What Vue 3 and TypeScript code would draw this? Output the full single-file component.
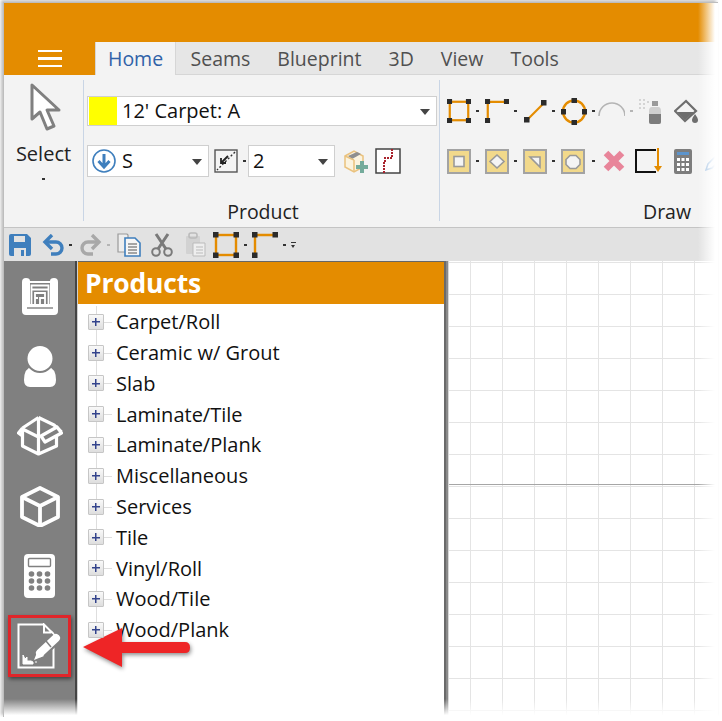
<script setup lang="ts">
const tabs = ['Seams', 'Blueprint', '3D', 'View', 'Tools']
const products = [
  'Carpet/Roll',
  'Ceramic w/ Grout',
  'Slab',
  'Laminate/Tile',
  'Laminate/Plank',
  'Miscellaneous',
  'Services',
  'Tile',
  'Vinyl/Roll',
  'Wood/Tile',
  'Wood/Plank',
]
</script>

<template>
  <div class="window">
    <!-- shared drawing symbols -->
    <svg class="defs" aria-hidden="true">
      <symbol id="node-square" viewBox="0 0 26 26">
        <rect x="3" y="3" width="20" height="20" fill="none" stroke="#e48c00" stroke-width="2.400" />
        <path d="M0 0h5.500v5.500H0zM20.500 0H26v5.500h-5.500zM0 20.500h5.500V26H0zM20.500 20.500H26V26h-5.500z" fill="#2b2b2b" />
      </symbol>
      <symbol id="node-corner" viewBox="0 0 26 26">
        <path d="M3 23V3h20" fill="none" stroke="#e48c00" stroke-width="2.400" />
        <path d="M0 0h5.500v5.500H0zM20.500 0H26v5.500h-5.500zM0 20.500h5.500V26H0z" fill="#2b2b2b" />
      </symbol>
    </svg>

    <div class="titlebar" />

    <div class="tabbar">
      <div class="menu-btn">
        <span /><span /><span />
      </div>
      <div class="tab active">Home</div>
      <div v-for="tab in tabs" :key="tab" class="tab">{{ tab }}</div>
    </div>

    <div class="ribbon">
      <div class="group select-group">
        <svg width="32" height="50" viewBox="0 0 32 50">
          <path d="M2 3v34l8-7 7 17 7-3-7-16h12z" fill="#fff" stroke="#808080" stroke-width="3" stroke-linejoin="round" />
        </svg>
        <div class="select-label">Select</div>
        <span class="drop" />
      </div>

      <div class="group product-group">
        <div class="rows">
          <div class="combo wide">
            <span class="swatch" />
            <span class="combo-text">12' Carpet: A</span>
            <span class="caret" />
          </div>
          <div class="row second">
            <div class="combo seam">
              <svg width="26" height="26" viewBox="0 0 26 26">
                <circle cx="13" cy="13" r="11" fill="#fff" stroke="#3f7fbd" stroke-width="1.6" />
                <path d="M13 6v13M7.500 13l5.500 6 5.500-6" fill="none" stroke="#3f7fbd" stroke-width="3" />
              </svg>
              <span class="combo-text">S</span>
              <span class="caret" />
            </div>
            <svg class="offset-icon" width="24" height="24" viewBox="0 0 24 24">
              <rect x="1" y="1" width="22" height="22" fill="#f4f4f4" stroke="#555" stroke-width="1.400" />
              <path d="M21 3L3 21" stroke="#333" stroke-width="1.400" stroke-dasharray="2 2" />
              <path d="M14 7l-7 7M7 9v5h5" fill="none" stroke="#222" stroke-width="1.800" />
            </svg>
            <span class="drop before-count" />
            <div class="combo count">
              <span class="combo-text">2</span>
              <span class="caret" />
            </div>
            <svg class="add-icon" width="26" height="26" viewBox="0 0 26 26">
              <path d="M2 8l9-5 9 5v11l-9 5-9-5z" fill="#fbf3df" stroke="#eac27e" stroke-width="1.500" />
              <path d="M5 8l9-4 4 2-9 5z" fill="#8f8f8f" />
              <path d="M11 12v11M2 8l9 4" fill="none" stroke="#eac27e" stroke-width="1.500" />
              <path d="M19 13v12M13 19h12" stroke="#74ab9b" stroke-width="4" />
            </svg>
            <svg class="route-icon" width="26" height="26" viewBox="0 0 26 26">
              <rect x="1" y="1" width="24" height="24" fill="#fff" stroke="#444" stroke-width="1.500" />
              <path d="M17 1v9h-7v5H9v10" fill="none" stroke="#a8222c" stroke-width="2" stroke-dasharray="2 1" />
            </svg>
          </div>
        </div>
        <div class="group-label">Product</div>
      </div>

      <div class="group draw-group">
        <div class="rows">
          <div class="row first">
            <svg width="24" height="24"><use href="#node-square" /></svg>
            <span class="drop" />
            <svg width="24" height="24"><use href="#node-corner" /></svg>
            <span class="drop" />
            <svg width="24" height="24" viewBox="0 0 24 24">
              <path d="M4 21L21 4" stroke="#e48c00" stroke-width="2.200" />
              <path d="M1 18h5.500v5.500H1zM18 1h5.500v5.500H18z" fill="#2b2b2b" />
            </svg>
            <span class="drop" />
            <svg width="26" height="27" viewBox="0 0 26 27">
              <circle cx="13" cy="13.500" r="11" fill="none" stroke="#e48c00" stroke-width="2.400" />
              <path d="M10.500 0H16v5h-5.500zM10.500 22H16v5h-5.500zM0 11h5v5.500H0zM21 11h5v5.500h-5z" fill="#2b2b2b" />
            </svg>
            <span class="drop tight" />
            <svg width="27" height="24" viewBox="0 0 27 24">
              <path d="M1 17a13 13 0 0 1 26 0" fill="none" stroke="#b4b4b4" stroke-width="1.600" />
            </svg>
            <span class="drop muted" />
            <svg width="35" height="26" viewBox="0 0 35 26">
              <path d="M0 1h2v2H0zM4 1h2v2H4zM0 5h2v2H0zM4 5h2v2H4zM8 3h2v2H8zM0 9h2v2H0zM4 9h2v2H4z" fill="#d4d4d4" />
              <rect x="13" y="3" width="6" height="5" fill="#9a9a9a" />
              <path d="M10 13q0-4 3-4h6q3 0 3 4v11q0 2-2 2h-8q-2 0-2-2z" fill="#cfcfcf" />
              <path d="M10 16h12v8q0 2-2 2h-8q-2 0-2-2z" fill="#7c7c7c" />
            </svg>
            <svg width="42" height="26" viewBox="0 0 42 26">
              <path d="M12 3L1 13l10 10 11-10z" fill="#f4f4f4" stroke="#6e6e6e" stroke-width="2.200" />
              <path d="M3 14h17l-9 8z" fill="#6e6e6e" />
              <path d="M21 16q-3 4-3 6a3 3 0 0 0 6 0q0-2-3-6z" fill="#6e6e6e" />
            </svg>
            <svg width="20" height="26" viewBox="0 0 20 26">
              <path d="M3 8q3-5 7-3" fill="none" stroke="#a6c6e6" stroke-width="3" />
              <path d="M1 18h3v6H1z" fill="#d4d4d4" />
            </svg>
          </div>
          <div class="row second">
            <svg width="24" height="25" viewBox="0 0 24 25">
              <rect x="1" y="1" width="22" height="23" fill="#f2d98b" stroke="#a3a3a3" stroke-width="2" />
              <rect x="7" y="7.500" width="10" height="10" fill="#f4f4f4" stroke="#999" stroke-width="1.600" />
            </svg>
            <span class="drop" />
            <svg width="24" height="25" viewBox="0 0 24 25">
              <rect x="1" y="1" width="22" height="23" fill="#f2d98b" stroke="#a3a3a3" stroke-width="2" />
              <path d="M12 6l7 6.500-7 6.500-7-6.500z" fill="#f4f4f4" stroke="#999" stroke-width="1.600" />
            </svg>
            <span class="drop" />
            <svg width="24" height="25" viewBox="0 0 24 25">
              <rect x="1" y="1" width="22" height="23" fill="#f2d98b" stroke="#a3a3a3" stroke-width="2" />
              <path d="M7 8h10v10z" fill="#f4f4f4" stroke="#999" stroke-width="1.600" />
            </svg>
            <span class="drop" />
            <svg width="26" height="25" viewBox="0 0 26 25">
              <rect x="1" y="1" width="22" height="23" fill="#f2d98b" stroke="#a3a3a3" stroke-width="2" />
              <path d="M9 6.500h6l4 4v5l-4 4H9l-4-4v-5z" fill="#f4f4f4" stroke="#999" stroke-width="1.600" />
            </svg>
            <span class="drop" />
            <svg width="34" height="24" viewBox="0 0 34 24">
              <path d="M5 4l16 16M21 4L5 20" stroke="#e8859a" stroke-width="6.500" />
            </svg>
            <svg width="38" height="26" viewBox="0 0 38 26">
              <path d="M21 2H1v22h20" fill="none" stroke="#111" stroke-width="2" />
              <path d="M23 0v20" stroke="#e48c00" stroke-width="2" />
              <path d="M19 18h8l-4 6z" fill="#e48c00" />
            </svg>
            <svg width="32" height="25" viewBox="0 0 32 25">
              <rect x="1" y="0" width="18" height="25" rx="2" fill="#7d7d7d" />
              <rect x="4" y="3" width="12" height="3" fill="#5c94cc" />
              <path d="M4 9h3v3H4zM8.500 9h3v3h-3zM13 9h3v3h-3zM4 14h3v3H4zM8.500 14h3v3h-3zM13 14h3v3h-3zM4 19h3v3H4zM8.500 19h3v3h-3zM13 19h3v3h-3z" fill="#fff" />
            </svg>
            <svg width="20" height="26" viewBox="0 0 20 26">
              <path d="M1 22l2-6L14 5l4 4L7 20z" fill="#f4f7fb" stroke="#8db4dc" stroke-width="1.500" />
            </svg>
          </div>
        </div>
        <div class="group-label draw-label">Draw</div>
      </div>
    </div>

    <div class="qat">
      <svg width="22" height="22" viewBox="0 0 22 22">
        <path d="M0 2q0-2 2-2h16l4 4v16q0 2-2 2H2q-2 0-2-2z" fill="#3f7fbd" />
        <path d="M5 2h11v6H5zM5 14h12v8H5z" fill="#e2e2e2" />
        <path d="M12 16h3v6h-3z" fill="#3f7fbd" />
      </svg>
      <svg class="q-undo" width="22" height="22" viewBox="0 0 22 22">
        <path d="M3 8h11a6 6 0 0 1 0 12H9" fill="none" stroke="#3f7fbd" stroke-width="3.400" />
        <path d="M10 1L3 8l7 7" fill="none" stroke="#3f7fbd" stroke-width="3.400" />
      </svg>
      <span class="drop" />
      <svg class="q-redo" width="22" height="22" viewBox="0 0 22 22">
        <path d="M19 8H8a6 6 0 0 0 0 12h5" fill="none" stroke="#a8a8a8" stroke-width="3.400" />
        <path d="M12 1l7 7-7 7" fill="none" stroke="#a8a8a8" stroke-width="3.400" />
      </svg>
      <span class="drop muted" />
      <svg class="q-copy" width="25" height="24" viewBox="0 0 25 24">
        <path d="M1 1h9l1 1v17H1z" fill="#eee" stroke="#9a9a9a" stroke-width="1.200" />
        <path d="M8 5h10l5 5v13H8z" fill="#f6f6f6" stroke="#3f7fbd" stroke-width="1.600" />
        <path d="M11 11h9M11 14h9M11 17h9M11 20h9" stroke="#555" stroke-width="1.200" />
      </svg>
      <svg class="q-cut" width="22" height="24" viewBox="0 0 22 24">
        <circle cx="5" cy="19" r="3.800" fill="none" stroke="#7a7a7a" stroke-width="2" />
        <circle cx="17" cy="19" r="3.800" fill="none" stroke="#7a7a7a" stroke-width="2" />
        <path d="M7 16L17 1M15 16L5 1" stroke="#7a7a7a" stroke-width="3" />
      </svg>
      <svg class="q-paste" width="21" height="25" viewBox="0 0 21 25">
        <rect x="1" y="4" width="14" height="18" rx="1" fill="#d2d2d2" />
        <rect x="4" y="1" width="8" height="5" rx="2" fill="none" stroke="#bbb" stroke-width="1.600" />
        <path d="M8 11h12v13H8z" fill="#eee" stroke="#bbb" />
        <path d="M11 15h7M11 18h7M11 21h7" stroke="#bbb" />
      </svg>
      <svg class="q-square" width="26" height="26"><use href="#node-square" /></svg>
      <span class="drop" />
      <svg width="26" height="26"><use href="#node-corner" /></svg>
      <span class="drop" />
      <span class="more" />
    </div>

    <div class="main">
      <nav class="sidebar">
        <div class="nav-item">
          <svg width="36" height="37" viewBox="0 0 36 37">
            <path d="M0 4q0-4 4-4t4 3h20q0-3 4-3t4 4v29q0 4-4 4H4q-4 0-4-4z" fill="#fff" />
            <path d="M8 5h20v21H8z" fill="#808080" />
            <path d="M9.500 26V7.500h17V26M9.500 11.500h17" fill="none" stroke="#fff" stroke-width="1.800" />
            <path d="M13 26v-11h10v5h-5v6M13 20h3M23 20v6" fill="none" stroke="#fff" stroke-width="1.800" />
            <path d="M5 30h26" stroke="#808080" stroke-width="1.400" />
          </svg>
        </div>
        <div class="nav-item">
          <svg width="32" height="42" viewBox="0 0 32 42">
            <path d="M0 35q0-12 9-14h14q9 2 9 14 0 7-6 7H6q-6 0-6-7z" fill="#fff" />
            <circle cx="16" cy="13.500" r="13.500" fill="#fff" stroke="#808080" stroke-width="2" />
          </svg>
        </div>
        <div class="nav-item">
          <svg width="46" height="40" viewBox="0 0 46 40">
            <path d="M5.500 13v17l16 8 18-8V18M21.500 21v17M5.500 13l16 8" fill="none" stroke="#fff" stroke-width="3.200" stroke-linejoin="round" />
            <path d="M5.500 12L1.500 17l4 3M5.500 12L21.500 1.500M21.500 1.500V21M21.500 1.500L37 9l7.500 7" fill="none" stroke="#fff" stroke-width="3.200" stroke-linejoin="round" />
            <path d="M24 20l16-9 4.500 6L28 26z" fill="#808080" stroke="#fff" stroke-width="3.200" stroke-linejoin="round" />
          </svg>
        </div>
        <div class="nav-item">
          <svg width="40" height="41" viewBox="0 0 40 41">
            <path d="M20 2L2 11v20l18 9 18-9V11z" fill="none" stroke="#fff" stroke-width="3.800" stroke-linejoin="round" />
            <path d="M2 11l18 9 18-9M20 20v20" fill="none" stroke="#fff" stroke-width="3.800" stroke-linejoin="round" />
          </svg>
        </div>
        <div class="nav-item">
          <svg width="31" height="44" viewBox="0 0 31 44">
            <rect width="31" height="44" rx="4" fill="#fff" />
            <rect x="4.500" y="4.500" width="22" height="8" rx="1" fill="none" stroke="#808080" stroke-width="1.400" />
            <g fill="#808080">
              <circle cx="7.500" cy="20" r="2.800" /><circle cx="15.500" cy="20" r="2.800" /><circle cx="23.500" cy="20" r="2.800" />
              <circle cx="7.500" cy="27" r="2.800" /><circle cx="15.500" cy="27" r="2.800" /><circle cx="23.500" cy="27" r="2.800" />
              <circle cx="7.500" cy="34" r="2.800" /><circle cx="15.500" cy="34" r="2.800" /><circle cx="23.500" cy="34" r="2.800" />
            </g>
          </svg>
        </div>
        <div class="nav-item">
          <div class="marked">
            <svg width="46" height="46" viewBox="0 0 46 46">
              <path d="M26 1.500H1.500v43h35V24" fill="none" stroke="#fff" stroke-width="2" />
              <path d="M27 1.500v8h8z" fill="none" stroke="#fff" stroke-width="2" />
              <path d="M22 30L39 15" stroke="#808080" stroke-width="13" />
              <path d="M23 30L39 15" stroke="#fff" stroke-width="8" stroke-linecap="round" />
              <path d="M17 37l4-10 6 6z" fill="#fff" />
              <path d="M29 18l5 6" stroke="#808080" stroke-width="1.500" />
              <path d="M34 8l7 8" stroke="#fff" stroke-width="1.500" />
              <path d="M6 38v-6l2 4 2-2v4h4l2 1v2H6zM18 39h2" fill="#fff" stroke="#fff" />
            </svg>
          </div>
        </div>
      </nav>
      <div class="split" />
      <section class="panel">
        <h2 class="panel-title">Products</h2>
        <ul class="tree">
          <li v-for="item in products" :key="item" class="tree-row">
            <span class="expander" />
            <span class="tree-text">{{ item }}</span>
          </li>
        </ul>
      </section>
      <div class="split wide-split" />
      <div class="canvas" />
    </div>

    <!-- faded screenshot edges -->
    <div class="fade-right" />
    <div class="fade-bottom" />

    <!-- callout arrow -->
    <svg class="callout" width="118" height="56" viewBox="0 0 118 56">
      <path d="M5 27L44 8v14h63q5 0 5 5.500T107 33H44v14z" fill="#ee2526" />
    </svg>
  </div>
</template>

<style scoped>
.window {
  position: relative;
  width: 715px;
  height: 715px;
  margin: 2px 0 0 3px;
  display: flex;
  flex-direction: column;
  overflow: hidden;
  font-family: "Open Sans", "Noto Sans", sans-serif;
  color: #111;
  background: #fff;
  border-top: 1px solid #bdbdbd;
  border-left: 1px solid #bdbdbd;
  box-sizing: border-box;
  box-shadow: -2px -2px 3px rgba(0, 0, 0, 0.25);
}
.defs {
  display: none;
}
svg {
  flex: none;
  display: block;
}
.titlebar {
  height: 39px;
  flex: none;
  background: #e48c00;
}
.tabbar {
  height: 33px;
  flex: none;
  display: flex;
  background: #e6e6e6;
  border-bottom: 1px solid #d6d6d6;
  box-sizing: border-box;
  font-size: 19.500px;
  color: #505050;
}
.menu-btn {
  width: 91px;
  height: 33px;
  flex: none;
  background: #e48c00;
  display: flex;
  flex-direction: column;
  align-items: center;
  justify-content: center;
  gap: 5px;
}
.menu-btn span {
  width: 24px;
  height: 2.500px;
  background: #fff;
}
.tab {
  padding: 0 13.500px;
  line-height: 33px;
  height: 33px;
  box-sizing: border-box;
}
.tab.active {
  width: 81px;
  padding: 0 12px;
  margin-right: 1px;
  background: #f3f3f3;
  color: #2f62a8;
  border-right: 1px solid #d6d6d6;
  border-left: 1px solid #d6d6d6;
}
.ribbon {
  height: 153px;
  flex: none;
  display: flex;
  box-sizing: border-box;
  padding: 5px 0 6px;
  background: #f3f3f3;
  border-bottom: 1px solid #c4c4c4;
  overflow: hidden;
}
.group {
  display: flex;
  flex-direction: column;
  box-sizing: border-box;
  flex: none;
}
.select-group {
  width: 80px;
  align-items: center;
  border-right: 1px solid #c9d5e5;
  padding-top: 2px;
}
.select-group svg {
  margin-left: 4px;
}
.select-label {
  font-size: 20px;
  line-height: 24px;
  margin-top: 10px;
  color: #222;
}
.select-group .drop {
  margin: 12px 0 0;
}
.product-group {
  width: 356px;
  padding: 16px 0 0 3px;
  border-right: 1px solid #c9d5e5;
}
.draw-group {
  flex: 1;
  min-width: 0;
  padding: 16px 0 0 7px;
}
.rows {
  flex: 1;
  display: flex;
  flex-direction: column;
  gap: 19px;
}
.row {
  display: flex;
  align-items: center;
}
.first {
  height: 30px;
}
.second {
  height: 32px;
}
.group-label {
  height: 20px;
  line-height: 22px;
  font-size: 19.500px;
  text-align: center;
  color: #222;
}
.draw-label {
  text-align: left;
  padding-left: 196px;
}
.combo {
  display: flex;
  align-items: center;
  box-sizing: border-box;
  background: #fff;
  border: 1px solid #cfcfcf;
  font-size: 20px;
  position: relative;
}
.combo-text {
  position: relative;
  top: -1px;
}
.combo.wide {
  width: 350px;
  height: 30px;
  padding-left: 1px;
}
.combo.seam {
  width: 122px;
  height: 32px;
  padding-left: 3px;
}
.combo.count {
  width: 87px;
  height: 32px;
  padding-left: 4px;
}
.swatch {
  width: 28px;
  height: 28px;
  background: #ff0;
  margin-right: 5px;
}
.seam .combo-text {
  margin-left: 5px;
}
.caret {
  position: absolute;
  right: 6px;
  top: 50%;
  margin-top: -2px;
  border-left: 5.500px solid transparent;
  border-right: 5.500px solid transparent;
  border-top: 6px solid #444;
}
.offset-icon {
  margin-left: 5px;
}
.add-icon {
  margin-left: 8px;
}
.route-icon {
  margin-left: 6px;
}
.drop {
  width: 3px;
  height: 2px;
  flex: none;
  margin: 0 6px 0 5px;
  background: #333;
}
.drop.tight {
  margin-right: 3px;
}
.drop.before-count {
  margin-right: 2px;
}
.drop.muted {
  background: #b5b5b5;
}
.qat {
  height: 33px;
  flex: none;
  display: flex;
  align-items: center;
  box-sizing: border-box;
  padding-left: 5px;
  background: #e2e2e2;
}
.q-undo {
  margin-left: 11px;
}
.qat .drop {
  margin: 0 5px;
}
.q-redo {
  margin-left: 3px;
}
.q-copy {
  margin-left: 2px;
}
.q-cut {
  margin-left: 9px;
}
.q-paste {
  margin-left: 12px;
}
.q-square {
  margin-left: 7px;
}
.more {
  width: 5px;
  height: 5px;
  border-top: 1px solid #333;
  position: relative;
}
.more::after {
  content: "";
  position: absolute;
  left: 0;
  top: 2px;
  border-left: 2.500px solid transparent;
  border-right: 2.500px solid transparent;
  border-top: 3px solid #333;
}
.main {
  flex: 1;
  min-height: 0;
  display: flex;
}
.sidebar {
  width: 71px;
  flex: none;
  background: #808080;
  display: flex;
  flex-direction: column;
}
.nav-item {
  height: 70px;
  flex: none;
  display: flex;
  align-items: center;
  justify-content: center;
}
.marked {
  width: 63px;
  height: 62px;
  box-sizing: border-box;
  display: flex;
  align-items: center;
  justify-content: center;
  border: 3px solid #e0252a;
  box-shadow: 1px 2px 4px rgba(0, 0, 0, 0.5);
}
.split {
  width: 3px;
  flex: none;
  background: linear-gradient(90deg, #444 0 2px, #cfcfcf 2px);
}
.wide-split {
  width: 5px;
  background: linear-gradient(90deg, #6a6a6a 0 2px, #8a8a8a 2px 4px, #d8d8d8 4px);
}
.panel {
  width: 366px;
  flex: none;
  background: #fff;
  border-top: 1px solid #666;
  box-sizing: border-box;
}
.panel-title {
  margin: 0;
  height: 42px;
  padding-left: 7px;
  background: #e48c00;
  color: #fff;
  font-size: 26.500px;
  line-height: 42px;
  font-weight: 700;
  letter-spacing: -0.2px;
}
.tree {
  list-style: none;
  margin: 0;
  padding: 2.400px 0 0;
}
.tree-row {
  position: relative;
  height: 30.800px;
  display: flex;
  align-items: center;
  font-size: 20px;
  padding-left: 38px;
}
.tree-row::before {
  content: "";
  position: absolute;
  left: 18px;
  top: 0;
  bottom: 0;
  border-left: 1px solid #dedede;
}
.tree-row:last-child::before {
  bottom: 50%;
}
.tree-row::after {
  content: "";
  position: absolute;
  left: 26px;
  width: 8px;
  top: 50%;
  border-top: 1px solid #dedede;
}
.expander {
  position: absolute;
  z-index: 1;
  left: 10px;
  top: 50%;
  width: 16px;
  height: 16px;
  margin-top: -8px;
  box-sizing: border-box;
  border: 1px solid #c6c6c6;
  border-radius: 1px;
  background:
    linear-gradient(#33438c, #33438c) center / 8px 1.500px no-repeat,
    linear-gradient(#33438c, #33438c) center / 1.500px 8px no-repeat,
    linear-gradient(#f9f9f9, #dedede);
}
.canvas {
  flex: 1;
  min-width: 0;
  background-color: #fff;
  background-image:
    linear-gradient(#a6a6a6, #a6a6a6),
    linear-gradient(90deg, #e4e4e4 1.500px, transparent 1.500px),
    linear-gradient(#e4e4e4 1.500px, transparent 1.500px);
  background-size: 100% 1px, 32px 32px, 32px 32px;
  background-position: 0 223px, 21px 0, 0 1px;
  background-repeat: no-repeat, repeat, repeat;
}
.fade-right {
  position: absolute;
  top: 0;
  right: 0;
  bottom: 0;
  width: 20px;
  background: linear-gradient(90deg, rgba(255, 255, 255, 0), #fff 85%);
  pointer-events: none;
}
.fade-bottom {
  position: absolute;
  left: 0;
  right: 0;
  bottom: 0;
  height: 18px;
  background: linear-gradient(rgba(255, 255, 255, 0), #fff 90%);
  pointer-events: none;
}
.callout {
  position: absolute;
  left: 74px;
  top: 617px;
  filter: drop-shadow(1px 2px 2px rgba(0, 0, 0, 0.45));
}
</style>

<style>
html,
body {
  background: #fff;
}
</style>
